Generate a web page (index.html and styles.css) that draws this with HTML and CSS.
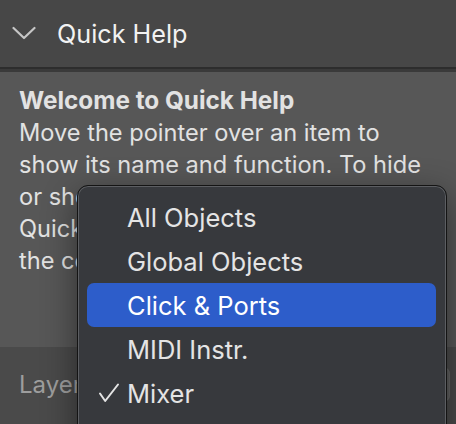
FILE: index.html
```html
<!DOCTYPE html>
<html lang="en">
<head>
<meta charset="utf-8">
<title>Quick Help</title>
<link rel="stylesheet" href="styles.css">
</head>
<body>
<div class="app">
  <header class="hdr">
    <svg class="chev" width="24" height="14" viewBox="0 0 24 14"><path d="M1.5 2 L12 12 L22.5 2" fill="none" stroke="#c6c6c6" stroke-width="2.2" stroke-linecap="round" stroke-linejoin="round"/></svg>
    <span class="hdr-title">Quick Help</span>
  </header>
  <div class="hdr-edge"></div>
  <section class="help">
    <p class="help-title">Welcome to Quick Help</p>
    <p class="help-text">
      <span class="ln">Move the pointer over an item to</span>
      <span class="ln">show its name and function. To hide</span>
      <span class="ln">or show Quick Help, click the</span>
      <span class="ln">Quick Help button in</span>
      <span class="ln">the control bar.</span>
    </p>
  </section>
  <footer class="foot">
    <span class="foot-label">Layer</span>
    <div class="foot-popup"></div>
  </footer>

  <div class="menu">
    <div class="item">All Objects</div>
    <div class="item">Global Objects</div>
    <div class="item item-active">Click &amp; Ports</div>
    <div class="item">MIDI Instr.</div>
    <div class="item">
      <svg class="check" width="22" height="20" viewBox="0 0 22 20"><path d="M2 10.5 L7.2 18 L20 1.5" fill="none" stroke="#e4e4e4" stroke-width="2" stroke-linecap="round" stroke-linejoin="round"/></svg>
      Mixer
    </div>
  </div>
</div>
</body>
</html>
```

FILE: styles.css
```css
* { box-sizing: border-box; }
html, body {
  margin: 0;
  padding: 0;
  width: 456px;
  height: 424px;
  overflow: hidden;
  background: #474747;
  font-family: Inter, "Noto Sans", "Liberation Sans", sans-serif;
}
.app {
  position: relative;
  width: 456px;
  height: 424px;
  display: flex;
  flex-direction: column;
}
.hdr {
  height: 67px;
  flex: none;
  background: #474747;
  display: flex;
  align-items: center;
  padding-left: 12px;
}
.chev { display: block; margin-right: 21px; margin-top: -2px; }
.hdr-title {
  color: #f2f2f2;
  font-size: 25.2px;
  line-height: 32px;
}
.hdr-edge {
  height: 5px;
  flex: none;
  background: #3a3a3a;
  border-top: 2px solid #2d2d2d;
}
.help {
  height: 275px;
  flex: none;
  background: #575757;
  padding: 12px 19px 0;
  color: #e2e2e2;
  font-size: 23.6px;
  line-height: 32px;
}
.help p { margin: 0; }
.help-title { font-weight: 700; font-size: 24.3px; margin-bottom: 1px !important; }
.ln { display: block; white-space: nowrap; }
.foot {
  flex: 1;
  background: #4a4a4a;
  display: flex;
  align-items: flex-start;
  padding: 20px 6px 0 19px;
}
.foot-label {
  color: #9e9e9e;
  font-size: 24px;
  line-height: 35px;
}
.foot-popup {
  margin-left: auto;
  width: 300px;
  height: 35px;
  border-radius: 7px;
  background: #5c5c5c;
  box-shadow: inset 0 0 0 1px #646464;
}
.menu {
  position: absolute;
  left: 77px;
  top: 185px;
  width: 370px;
  height: 280px;
  background: #37393d;
  border: 1px solid #141414;
  border-radius: 11px;
  box-shadow: inset 0 0 0 1px #5c5e62, 0 10px 34px rgba(0,0,0,0.45);
  padding: 9px 10px 9px 9px;
}
.item {
  position: relative;
  height: 44px;
  line-height: 46px;
  padding-left: 40px;
  font-size: 25.5px;
  color: #e4e4e4;
  border-radius: 7px;
  white-space: nowrap;
}
.item-active {
  background: #2d5dca;
  color: #ffffff;
}
.check {
  position: absolute;
  left: 11px;
  top: 12px;
}
```
